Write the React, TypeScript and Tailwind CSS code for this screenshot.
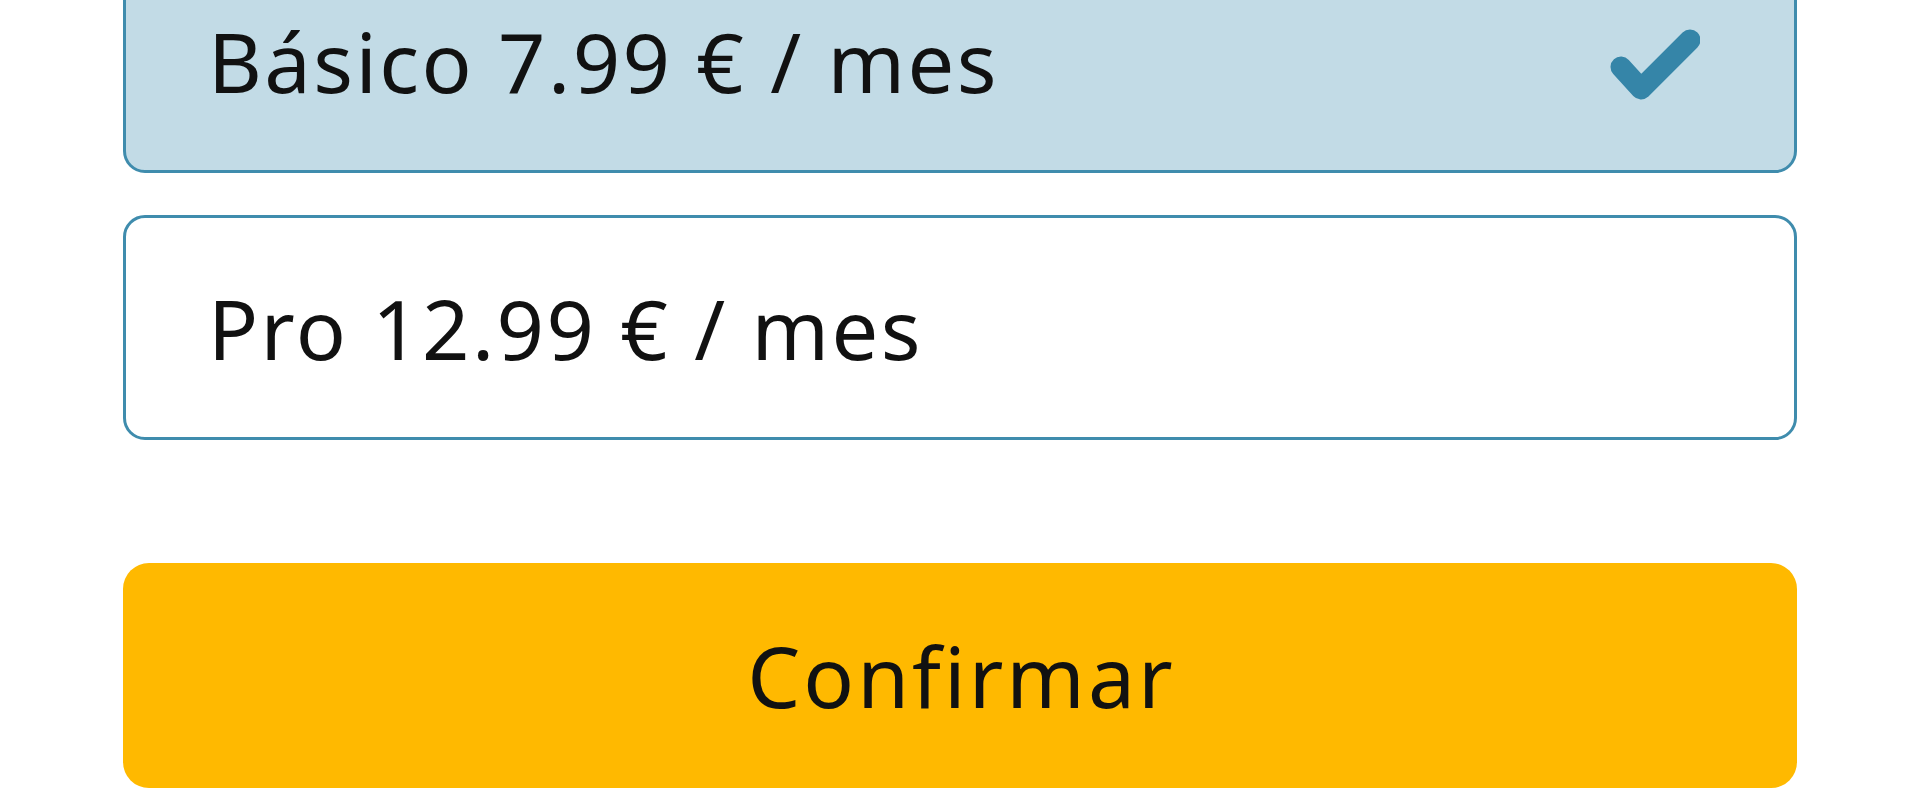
import { useState } from "react";

type Plan = {
    id: string;
    label: string;
};

const plans: Plan[] = [
    { id: "basico", label: "Básico 7.99 € / mes" },
    { id: "pro", label: "Pro 12.99 € / mes" },
];

function Check() {
    return (
        <svg width="100" height="84" viewBox="0 0 100 84" className="shrink-0">
            <polyline
                points="21,48 41,70 90,21"
                fill="none"
                stroke="#3585a8"
                strokeWidth="21"
                strokeLinecap="round"
                strokeLinejoin="round"
            />
        </svg>
    );
}

export default function App() {
    const [selected, setSelected] = useState("basico");

    return (
        <div className="min-h-[800px] bg-white overflow-hidden font-['Noto_Sans',sans-serif]">
            <div className="flex flex-col px-[123px] -mt-[52px]">
                {plans.map((plan, index) => {
                    const active = plan.id === selected;
                    return (
                        <button
                            key={plan.id}
                            type="button"
                            onClick={() => setSelected(plan.id)}
                            className={
                                "flex items-center justify-between h-[225px] rounded-[22px] border-[3px] border-[#3f8cad] pl-[82px] pr-[94px] text-left " +
                                (active ? "bg-[#c2dbe6]" : "bg-white") +
                                (index > 0 ? " mt-[42px]" : "")
                            }
                        >
                            <span className="text-[83px] leading-none text-[#111] tracking-[2.4px]">{plan.label}</span>
                            {active && <Check />}
                        </button>
                    );
                })}

                <button
                    type="button"
                    className="mt-[123px] h-[225px] rounded-[26px] bg-[#ffb900] flex items-center justify-center"
                >
                    <span className="text-[84px] leading-none text-[#111] tracking-[3px] pl-[3px]">Confirmar</span>
                </button>
            </div>
        </div>
    );
}
